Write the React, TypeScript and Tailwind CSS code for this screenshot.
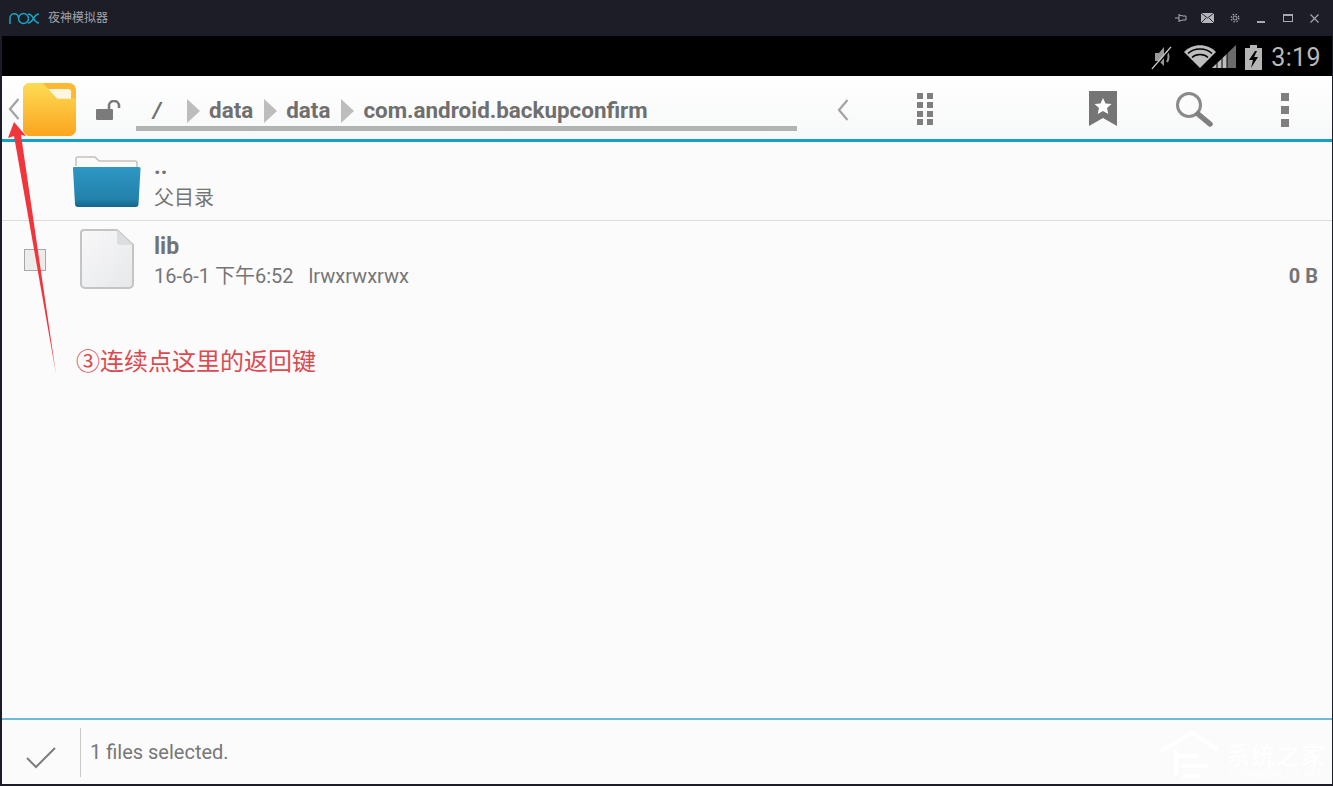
import React from 'react'

const FONT = "font-['Roboto','Noto_Sans_CJK_SC',sans-serif]"

function NoxLogo() {
  return (
    <svg width="31" height="13" viewBox="0 0 31 13" fill="none" stroke="#18a5c5" strokeWidth="1.500">
      <path d="M1 12V6a4.300 4.300 0 0 1 8.600 0" />
      <circle cx="14.500" cy="6.500" r="5" />
      <path d="M19 2c3 0 4 2 5.500 4.500S27 11 30 11M19 11c3 0 4-2 5.500-4.500S27 2 30 2" />
    </svg>
  )
}

function WindowIcons() {
  return (
    <div className="flex items-center">
      <svg className="mr-[14px]" width="12" height="10" viewBox="0 0 12 10" fill="none" stroke="#a9aab0" strokeWidth="1">
        <path d="M0 5h4M4 1v8M4 2l4 1h3v4H8L4 8" />
      </svg>
      <svg className="mr-[16px]" width="13" height="10" viewBox="0 0 13 10">
        <rect width="13" height="10" fill="#b4b5ba" />
        <path d="M0 0l6.500 5L13 0M0 10l5-5M13 10L8 5" stroke="#1c1d26" strokeWidth="0.9" fill="none" />
      </svg>
      <svg className="mr-[17px]" width="10" height="10" viewBox="0 0 10 10" fill="none" stroke="#a9aab0">
        <circle cx="5" cy="5" r="2" />
        <circle cx="5" cy="5" r="3.800" strokeWidth="1.200" strokeDasharray="1.500 1.500" />
      </svg>
      <div className="mr-[18px] mt-[8px] h-[2px] w-[8px] bg-[#a9aab0]" />
      <div className="mr-[17px] h-[8px] w-[10px] border border-t-2 border-[#a9aab0]" />
      <svg className="mr-[14px]" width="9" height="9" viewBox="0 0 9 9" stroke="#a9aab0" strokeWidth="1.100">
        <path d="M0.500 0.500l8 8M8.500 0.500l-8 8" />
      </svg>
    </div>
  )
}

function StatusIcons() {
  return (
    <div className="flex h-full items-center justify-end">
      <svg className="mr-[11px] mt-[2px]" width="23" height="26" viewBox="0 0 23 26">
        <path d="M11 3v19l-5-5H2V9h4z" fill="#9a9a9a" transform="translate(3 0)" />
        <path d="M17 7c2 3 2 8 0 11" stroke="#9a9a9a" strokeWidth="2" fill="none" />
        <path d="M21 3L2 25" stroke="#c4c4c4" strokeWidth="1.500" />
        <path d="M22 4L3 26" stroke="#000" strokeWidth="1.200" />
      </svg>
      <svg className="mt-[1px]" width="54" height="26" viewBox="0 0 54 26">
        <path d="M0 8C8-1 24-1 32 8L16 24z" fill="#bdbdbd" />
        <path d="M4 9.500C10 3.500 22 3.500 28 9.500M8 13.500C12 9.500 20 9.500 24 13.500" stroke="#000" strokeWidth="1.500" fill="none" />
        <path d="M28 24 L52 1 V24z" fill="#6b6b6b" />
        <path d="M28 24 L43 10 V24z" fill="#bdbdbd" />
        <path d="M33 24V19M38 24V14M43 24V9" stroke="#000" strokeWidth="1" />
      </svg>
      <svg className="ml-[7px] mr-[9px] mt-[1px]" width="17" height="26" viewBox="0 0 17 26">
        <path d="M5 1h7v3h5v22H0V4h5z" fill="#b5b5b5" />
        <path d="M10 7L4 16h4l-2 8 7-11H9l3-6z" fill="#000" />
      </svg>
      <span className="mr-[11px] mt-[2px] text-[25px] leading-none tracking-[0.4px] text-[#b9b9b9]">3:19</span>
    </div>
  )
}

function ChevronLeft({ className }: { className: string }) {
  return (
    <svg className={className} width="12" height="22" viewBox="0 0 12 22" fill="none" stroke="#a3a3a3" strokeWidth="2.200">
      <path d="M10.500 1 2 11l8.500 10" />
    </svg>
  )
}

function AppFolder() {
  return (
    <svg className="mt-[4px]" width="53" height="53" viewBox="0 0 54 54">
      <defs>
        <linearGradient id="appFolder" x1="0" y1="0" x2="0" y2="1">
          <stop offset="0" stopColor="#fddc55" />
          <stop offset="1" stopColor="#fba51f" />
        </linearGradient>
      </defs>
      <rect width="54" height="54" rx="7" fill="#fdb933" />
      <path d="M22 6h24a3 3 0 0 1 3 3v14H34z" fill="#fff6e0" />
      <path d="M7 0h13l15 16h19v31a7 7 0 0 1-7 7H7a7 7 0 0 1-7-7V7a7 7 0 0 1 7-7z" fill="url(#appFolder)" />
    </svg>
  )
}

function Crumb() {
  return (
    <svg className="ml-[11px] mr-[9px] shrink-0" width="13" height="24" viewBox="0 0 13 24">
      <path d="M0 0l13 12L0 24z" fill="#bdbdbd" />
    </svg>
  )
}

function Toolbar() {
  return (
    <div className="flex h-[63px] items-center bg-gradient-to-b from-white to-[#f7f8f9]">
      <ChevronLeft className="ml-[6px] mr-[3px] mt-[3px]" />
      <AppFolder />
      <svg className="ml-[20px] mt-[4px]" width="26" height="20" viewBox="0 0 26 20">
        <rect y="9" width="17" height="11" rx="1" fill="#7b7b7b" />
        <path d="M13 9V6a5 5 0 0 1 10 0v2" stroke="#7b7b7b" strokeWidth="2.600" fill="none" />
      </svg>
      <div className="ml-[14px] flex h-[55px] w-[661px] items-center self-start border-b-[5px] border-[#b3b3b3] pt-[20px] text-[22.400px] font-bold text-[#6f6f6f]">
        <span className="ml-[17px] mr-[15px] italic">/</span>
        <Crumb />
        <span>data</span>
        <Crumb />
        <span>data</span>
        <Crumb />
        <span className="whitespace-nowrap">com.android.backupconfirm</span>
      </div>
      <ChevronLeft className="ml-[40px] mt-[5px]" />
      <svg className="ml-[67px] mt-[3px]" width="20" height="32" viewBox="0 0 20 32" fill="#7f7f7f">
        {[0, 9, 18, 26].map(y => (
          <g key={y}>
            <rect x="1" y={y} width="6" height="6" />
            <rect x="11" y={y} width="6" height="6" />
          </g>
        ))}
      </svg>
      <svg className="ml-[153px] mt-[2px]" width="28" height="36" viewBox="0 0 28 36">
        <path d="M0 0h28v35L14 27 0 35z" fill="#757575" />
        <path d="M14 7l2.500 5.500 6 .6-4.500 4 1.300 6L14 20l-5.300 3.100 1.300-6-4.500-4 6-.6z" fill="#fff" />
      </svg>
      <svg className="ml-[58px] mt-[2px]" width="38" height="36" viewBox="0 0 38 36" fill="none">
        <circle cx="14" cy="14" r="11.500" stroke="#8a8a8a" strokeWidth="3" />
        <path d="M23 23l12 10" stroke="#7f7f7f" strokeWidth="5.500" strokeLinecap="round" />
      </svg>
      <div className="ml-[68px] mt-[4px] flex flex-col gap-[5px]">
        <div className="h-[8px] w-[8px] bg-[#7f7f7f]" />
        <div className="h-[8px] w-[8px] bg-[#7f7f7f]" />
        <div className="h-[8px] w-[8px] bg-[#7f7f7f]" />
      </div>
    </div>
  )
}

function BlueFolder() {
  return (
    <svg width="68" height="52" viewBox="0 0 68 52">
      <defs>
        <linearGradient id="blueFolder" x1="0" y1="0" x2="0" y2="1">
          <stop offset="0" stopColor="#2f97c4" />
          <stop offset="0.8" stopColor="#2282ab" />
          <stop offset="1" stopColor="#14668a" />
        </linearGradient>
      </defs>
      <path d="M3 10V3a2 2 0 0 1 2-2h17l4 4h36a2 2 0 0 1 2 2v4" fill="#fafafa" stroke="#c7c2b9" strokeWidth="1.500" />
      <path d="M1 11h65a1.500 1.500 0 0 1 1.500 2l-2 35a3 3 0 0 1-3 3H5a3 3 0 0 1-3-3L0 13a1.500 1.500 0 0 1 1-2z" fill="url(#blueFolder)" />
    </svg>
  )
}

function FileIcon() {
  return (
    <svg width="54" height="60" viewBox="0 0 54 60">
      <defs>
        <linearGradient id="fileFill" x1="0" y1="0" x2="1" y2="1">
          <stop offset="0" stopColor="#f8f8f9" />
          <stop offset="1" stopColor="#e7e8ea" />
        </linearGradient>
      </defs>
      <path d="M4 1h33l16 15v39a4 4 0 0 1-4 4H5a4 4 0 0 1-4-4V4a3 3 0 0 1 3-3z" fill="url(#fileFill)" stroke="#c3c4c6" strokeWidth="2" />
      <path d="M37 1v12a3 3 0 0 0 3 3h13z" fill="#dcdde0" />
    </svg>
  )
}

function FileList() {
  return (
    <div className="flex-1 bg-[#fbfbfb]">
      <div className="flex h-[79px] border-b border-[#dcdcdc]">
        <div className="ml-[71px] mt-[14px]">
          <BlueFolder />
        </div>
        <div className="ml-[13px] flex flex-col">
          <span className="mt-[11px] h-[28px] text-[23px] font-bold leading-[28px] text-[#737373]">..</span>
          <span className="mt-[5px] text-[20px] leading-[24px] text-[#757575]">父目录</span>
        </div>
      </div>
      <div className="flex h-[80px]">
        <div className="ml-[22px] mt-[28px] h-[22px] w-[22px] border border-[#a8a8a8] bg-[#ececec]" />
        <div className="ml-[34px] mt-[8px]">
          <FileIcon />
        </div>
        <div className="ml-[20px] flex flex-1 flex-col">
          <span className="mt-[12px] h-[28px] text-[23px] font-bold leading-[28px] text-[#737373]">lib</span>
          <div className="mt-[3px] flex items-center justify-between text-[20px] leading-[24px] text-[#757575]">
            <span className="whitespace-pre">16-6-1 下午6:52   lrwxrwxrwx</span>
            <span className="mr-[14px] font-bold">0 B</span>
          </div>
        </div>
      </div>
    </div>
  )
}

function Footer() {
  return (
    <div className="flex h-[66px] items-center border-t-2 border-[#6cbcd9] bg-[#fbfbfb]">
      <svg className="ml-[24px] mt-[11px]" width="30" height="22" viewBox="0 0 30 22" fill="none" stroke="#7d7d7d" strokeWidth="2">
        <path d="M1 11l9 9L29 1" />
      </svg>
      <div className="ml-[24px] mt-[1px] h-[49px] w-px bg-[#c9c9c9]" />
      <span className="ml-[9px] text-[20px] text-[#777777]">1 files selected.</span>
    </div>
  )
}

export default function App() {
  return (
    <div className={`${FONT} flex h-[786px] w-[1333px] flex-col overflow-hidden bg-[#1c1d26]`}>
      {/* emulator title bar */}
      <div className="flex h-9 shrink-0 items-center justify-between">
        <div className="flex items-center">
          <div className="ml-[9px] mt-[1px]">
            <NoxLogo />
          </div>
          <span className="ml-[8px] text-[12px] text-[#a2a3a9]">夜神模拟器</span>
        </div>
        <WindowIcons />
      </div>

      <div className="relative mb-[2px] ml-[2px] mr-[1px] flex flex-1 flex-col">
        <div className="h-10 shrink-0 bg-black">
          <StatusIcons />
        </div>
        <Toolbar />
        <div className="h-[3px] shrink-0 bg-[#15a0c8]" />
        <FileList />
        <Footer />

        {/* red annotation over the screen */}
        <svg className="absolute left-0 top-[80px]" width="70" height="270" viewBox="0 0 70 270">
          <path d="M12 6L6 22l6-2 42 238-35-239 5 1z" fill="#f0353b" />
        </svg>
        <span className="absolute left-[74px] top-[311px] text-[24px] leading-[30px] text-[#dc4a50]">③连续点这里的返回键</span>

        {/* watermark */}
        <div className="absolute bottom-[4px] right-[6px] flex items-end text-white">
          <svg width="62" height="50" viewBox="0 0 62 50" fill="none" stroke="#ffffff" strokeWidth="4">
            <path d="M0 22 L32 3 L58 20" />
            <path d="M16 20V46M16 26h22M22 36h26M22 46h18" />
          </svg>
          <div className="ml-[4px] flex flex-col items-center">
            <span className="text-[24px] leading-[26px] tracking-[1px]">系统之家</span>
            <span className="mt-[1px] text-[9px] leading-[10px] tracking-[1px]">XITONGZHIJIA.NET</span>
          </div>
        </div>
      </div>
    </div>
  )
}
